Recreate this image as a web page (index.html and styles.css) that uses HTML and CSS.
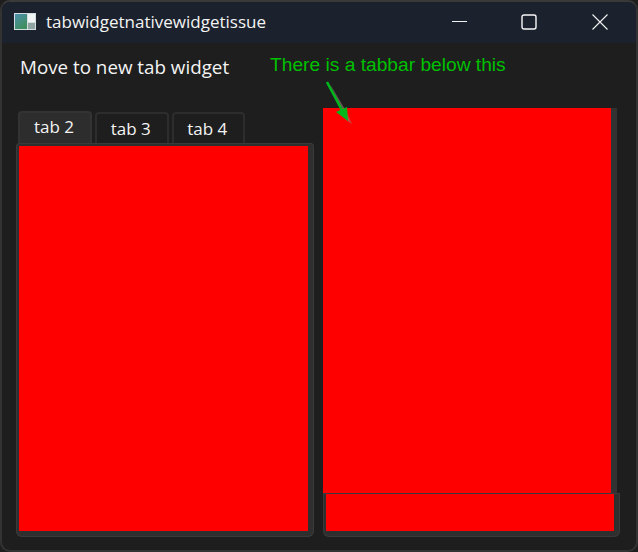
FILE: index.html
```html
<!DOCTYPE html>
<html lang="en">
<head>
  <meta charset="UTF-8" />
  <meta name="viewport" content="width=device-width, initial-scale=1.0" />
  <title>tabwidgetnativewidgetissue</title>
  <link rel="stylesheet" href="styles.css">
</head>
<body>
  <div class="window">
    <div class="titlebar">
      <svg class="app-icon" width="22" height="17" viewBox="0 0 22 17">
        <rect width="22" height="17" fill="#d4dde0"/>
        <defs>
          <linearGradient id="pane" x1="0" y1="0" x2="0.6" y2="1">
            <stop offset="0" stop-color="#4c8fae"/>
            <stop offset="1" stop-color="#3f8f5e"/>
          </linearGradient>
        </defs>
        <rect x="1" y="1" width="12" height="15" fill="url(#pane)"/>
        <rect x="14" y="1" width="7" height="8" fill="#f1f4f4"/>
        <rect x="14" y="10" width="7" height="6" fill="#8fa3a3"/>
      </svg>
      <div class="title">tabwidgetnativewidgetissue</div>
      <div class="window-buttons">
        <svg class="win-btn" width="16" height="16" viewBox="0 0 16 16">
          <path d="M0 7.5H15" stroke="#f2f2f2" fill="none"/>
        </svg>
        <svg class="win-btn win-max" width="16" height="16" viewBox="0 0 16 16">
          <rect x="1" y="1" width="14" height="14" rx="2" stroke="#f8f8f8" stroke-width="1.4" fill="none"/>
        </svg>
        <svg class="win-btn" width="16" height="16" viewBox="0 0 16 16">
          <path d="M0.5 0.5L15.5 15.5M15.5 0.5L0.5 15.5" stroke="#f2f2f2" stroke-width="1.1" fill="none"/>
        </svg>
      </div>
    </div>

    <div class="content">
      <div class="left-col">
        <div class="move-label">Move to new tab widget</div>
        <div class="tabbar">
          <div class="tab active">tab 2</div>
          <div class="tab">tab 3</div>
          <div class="tab">tab 4</div>
        </div>
        <div class="pane">
          <div class="red-fill"></div>
        </div>
      </div>

      <div class="right-col">
        <div class="native-widget">
          <div class="red-fill"></div>
        </div>
        <div class="pane pane-cut">
          <div class="red-fill"></div>
        </div>
      </div>

      <div class="note">There is a tabbar below this</div>
      <svg class="note-arrow" width="34" height="46" viewBox="0 0 34 46">
        <path d="M9 3L25 30L31 43L25 39Z" fill="#a08080" opacity="0.55"/>
        <path d="M6 1L23 33" stroke="#00b81c" stroke-width="2.6" fill="none"/>
        <path d="M15 31L26 26L27 40Z" fill="#00b81c"/>
      </svg>
    </div>
  </div>
</body>
</html>
```

FILE: styles.css
```css
* {
  box-sizing: border-box;
  margin: 0;
  padding: 0;
}

html, body {
  height: 100%;
  background-color: #1e1e1e;
  overflow: hidden;
}

body {
  font-family: 'Open Sans', 'Noto Sans', sans-serif;
  color: #f4f4f4;
}

.window {
  display: flex;
  flex-direction: column;
  height: 552px;
  border: 2px solid #333;
  border-radius: 10px;
  border-top-color: #3a3a3a;
  overflow: hidden;
  background-color: #1e1e1e;
}

.titlebar {
  display: flex;
  align-items: center;
  height: 41px;
  background-color: #1b222d;
  padding-left: 12px;
  flex-shrink: 0;
}

.app-icon {
  margin-right: 10px;
  margin-top: -2px;
}

.title {
  font-size: 17px;
  line-height: 24px;
  margin-top: -2px;
  flex: 1;
}

.window-buttons {
  display: flex;
  gap: 54px;
  margin-right: 28px;
  margin-top: -2px;
}

.win-max {
  position: relative;
  left: -1px;
}

.content {
  position: relative;
  display: flex;
  flex: 1;
  padding-left: 14px;
}

.left-col {
  width: 298px;
  display: flex;
  flex-direction: column;
  margin-right: 9px;
}

.move-label {
  font-size: 18.8px;
  line-height: 24px;
  margin: 12px 0 0 4px;
  height: 56px;
}

.tabbar {
  display: flex;
  gap: 3px;
  height: 32px;
  margin-left: 2px;
  align-items: flex-end;
}

.tab {
  width: 73.5px;
  height: 31px;
  font-size: 17px;
  line-height: 30px;
  text-align: center;
  padding-right: 2px;
  border: 2px solid #2d2d2d;
  border-bottom: none;
  border-radius: 4px 4px 0 0;
}

.tab.active {
  width: 74px;
  height: 32px;
  line-height: 28px;
  background-color: #2d2d2d;
  border-color: #333;
}

.pane {
  width: 298px;
  height: 394px;
  padding: 3px 6px 6px 3px;
  background-color: #2f2f2f;
  box-shadow: inset 0 0 0 1px #3a3a3a;
  border-radius: 4px 4px 6px 6px;
}

.red-fill {
  height: 100%;
  background-color: #f00;
}

.right-col {
  display: flex;
  flex-direction: column;
  width: 297px;
  padding-top: 65px;
}

.native-widget {
  width: 294px;
  height: 385px;
  padding-right: 6px;
  background-color: #323232;
}

.pane-cut {
  width: 297px;
  height: 44px;
  padding-top: 1px;
  border-radius: 0 0 6px 6px;
}

.note {
  position: absolute;
  left: 268px;
  top: 10px;
  font-family: 'Liberation Sans', Arial, sans-serif;
  font-size: 19.2px;
  line-height: 24px;
  color: #00c000;
}

.note-arrow {
  position: absolute;
  left: 319px;
  top: 38px;
}
```
